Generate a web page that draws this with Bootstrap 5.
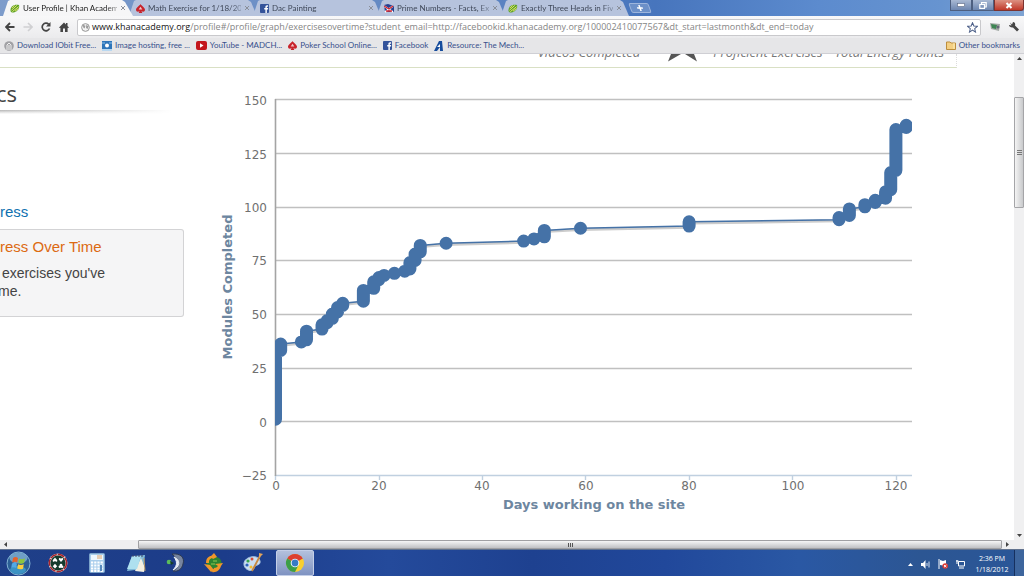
<!DOCTYPE html>
<html lang="en">
<head>
<meta charset="utf-8">
<meta name="viewport" content="width=device-width, initial-scale=1">
<title>User Profile | Khan Academy</title>
<link href="https://cdn.jsdelivr.net/npm/bootstrap@5.3.0/dist/css/bootstrap.min.css" rel="stylesheet">
<style>
  body { font-family: "Open Sans", "Noto Sans", sans-serif; background: #fff; color: #333; }
  svg { display: block; flex: none; }
  button { background: none; border: 0; padding: 0; color: inherit; }
  a { text-decoration: none; color: inherit; }
  .ui-text { font: 8px/12px Lato, "Open Sans", sans-serif; white-space: nowrap; }

  .title-strip { height: 16px; background: linear-gradient(90deg, #7d9ccb 0, #5f86c2 45%, #4775bd 64%, #5c8bce 80%, #6794d0 92%, #7fa4d3 100%); padding-left: 3px; }
  .browser-tab { width: 128px; height: 16px; margin-right: -4px; padding: 0 7px 0 7px; gap: 3px; background: #b6c3dd; color: #3f4859;
    clip-path: polygon(0 100%, 5px 1px, 7px 0, 119px 0, 122px 2px, 100% 100%); }
  .browser-tab.current { background: #f6f6f7; width: 130px; z-index: 1; color: #222; }
  .tab-name { -webkit-mask-image: linear-gradient(90deg, #000 88%, rgba(0,0,0,.4)); min-width: 0; }
  .new-tab { width: 20px; height: 10px; margin: 3px 0 0 5px; background: #6c90c8; border: 1px solid #9db5dc; border-radius: 2px; transform: skewX(20deg); }
  .win-buttons button { width: 22px; height: 11px; background: linear-gradient(#a9b9d3, #6d86b0); border: 1px solid #4d5f80; border-top: 0; }
  .win-buttons .win-close { width: 30px; background: linear-gradient(#dc9182, #c0392a); border-color: #7c3330; border-radius: 0 0 3px 0; }

  .tool-row { height: 22px; background: linear-gradient(#f8f8f9, #ebebed); padding: 0 5px; }
  .address-field { height: 17px; border: 1px solid #c9c9cc; border-radius: 2px; background: #fff; font-size: 9px; color: #858585; white-space: nowrap; padding: 0 2px 0 3px; gap: 2px; }
  .address-field b { font-weight: 400; color: #151515; }
  .mark-row { height: 16px; background: #e6e6e8; border-bottom: 1px solid #cfcfd4; color: #37508c; padding: 0 4px; gap: 6px; line-height: 11px; }
  .mark-row a { display: flex; align-items: center; gap: 3px; }

  .page-pane { min-height: 0; background: #fff; }
  .stat-strip { height: 14px; width: 957px; max-width: 100%; overflow: hidden; border-bottom: 1px solid #d9e0c4; border-right: 1px dotted #ddd; font: italic 13px/16px "Open Sans", sans-serif; color: #777; padding-right: 12px; gap: 12px; }
  .stat-strip span { margin-top: -10px; }
  .star-tip { margin: 0 4px 0 16px; }
  .side-menu { width: 184px; flex: none; font-family: "Liberation Sans", Arial, sans-serif; line-height: 18px; }
  .side-menu h2 { font: 22px/24px "Open Sans", sans-serif; color: #444; margin: 13px 0 0; text-indent: -4px; }
  .fade-rule { height: 4px; width: 172px; margin-top: 5px; background: linear-gradient(90deg, rgba(255,255,255,0), #fff), linear-gradient(#b5b5b5, #e6e6e6 60%, #fff); }
  .side-link { font-size: 15px; color: #0f71b0; margin-top: 89px; }
  .side-card { height: 88px; margin-top: 8px; padding-top: 8px; background: #f5f5f6; border: 1px solid #d3d3d5; border-left: 0; border-radius: 0 3px 3px 0; }
  .side-card a { font-size: 15px; color: #dc6a12; }
  .side-card p { font-size: 14px; color: #444; margin: 8px 0 0 -2px; }

  .chart-holder { min-width: 0; }
  .chart-holder svg { width: 100%; height: auto; }
  .tick-text { font: 12px "DejaVu Sans", sans-serif; fill: #707070; }
  .axis-name { font: bold 13px "DejaVu Sans", sans-serif; fill: #6d869f; }
  .data-marks path { vector-effect: non-scaling-stroke; stroke-linecap: round; stroke-linejoin: round; fill: none; }

  .v-scroll { width: 10px; background: #f0f0f1; }
  .v-scroll .thumb { height: 111px; margin-top: 34px; border: 1px solid #a5a5a8; border-radius: 1px; background: linear-gradient(90deg, #f4f4f4, #c9cacc); }
  .h-scroll { height: 9px; background: #efeff0; padding-right: 12px; }
  .h-scroll .thumb { height: 9px; border: 1px solid #a0a0a3; border-radius: 1px; background: linear-gradient(#f6f6f6, #bfc0c3); margin-left: 128px; }
  .h-scroll button, .v-scroll button { width: 10px; height: 9px; display: grid; place-items: center; }

  .task-strip { height: 27px; border-top: 1px solid #62738f; color: #fff;
    background: linear-gradient(90deg, #1f3f88 0, #1c3c8a 22%, #244a9b 38%, #1e4190 52%, #21489b 65%, #2a58a4 78%, #2c5693 90%, #2a5698 100%); }
  .task-item { width: 39px; height: 26px; display: grid; place-items: center; }
  .task-item.start-orb { width: 36px; margin-right: 2px; }
  .task-item.running { width: 38px; margin-left: 4px; border: 1px solid #c4cfe8; border-radius: 2px; background: linear-gradient(#b3c0dc, #7f93c2); }
  .tray { padding: 2px 3px 0 0; }
  .clock-text { width: 38px; font: 7px/11px "Open Sans", sans-serif; white-space: nowrap; }
  .desk-edge { width: 10px; border-left: 1px solid #16305f; background: #3d659d; }
</style>
</head>
<body class="vh-100 d-flex flex-column overflow-hidden">
<svg width="0" height="0" class="position-absolute" aria-hidden="true">
  <symbol id="leaf" viewBox="0 0 10 10"><path d="M0 8C-.5 3 3 0 9.500 1C10.500 6 7 9 1.500 9.500Z" fill="#5da32c"/><path d="M1 7L7 1.500M2 8.500L9 3M5 8L9 5M1.500 4.500L4.500 1.500" stroke="#e3e36b" stroke-width="1.100"/></symbol>
  <symbol id="spade" viewBox="0 0 10 10"><path d="M5 0C6 2 10 4 10 6.500C10 9 7 9 6 7.500L7 10H3L4 7.500C3 9 0 9 0 6.500C0 4 4 2 5 0Z" fill="#c8232b"/><path d="M5 3L7 6H3Z" fill="#fff" opacity=".75"/></symbol>
  <symbol id="fb" viewBox="0 0 10 10"><rect width="10" height="10" rx="1" fill="#34539a"/><path d="M9 1.500H8C6.500 1.500 6 2.300 6 3.500V4.500H4.700V6H6V10H7.600V6H9V4.500H7.600V3.600C7.600 3 8 3 9 3Z" fill="#fff"/></symbol>
  <symbol id="cross" viewBox="0 0 6 6"><path d="M1 1L5 5M5 1L1 5" stroke="#8a8f99" stroke-width="1"/></symbol>
</svg>

<header>
  <nav class="title-strip d-flex ui-text" aria-label="Tabs">
    <div class="browser-tab current d-flex align-items-center position-relative"><svg width="10" height="9"><use href="#leaf"/></svg><a href="#" class="tab-name flex-fill">User Profile | Khan Academ</a><button aria-label="Close tab"><svg width="6" height="6"><use href="#cross"/></svg></button></div>
    <div class="browser-tab d-flex align-items-center"><svg width="9" height="9"><use href="#spade"/></svg><a href="#" class="tab-name flex-fill">Math Exercise for 1/18/2012</a><button aria-label="Close tab"><svg width="6" height="6"><use href="#cross"/></svg></button></div>
    <div class="browser-tab d-flex align-items-center"><svg width="9" height="9"><use href="#fb"/></svg><a href="#" class="tab-name flex-fill">Dac Painting</a><button aria-label="Close tab"><svg width="6" height="6"><use href="#cross"/></svg></button></div>
    <div class="browser-tab d-flex align-items-center"><svg width="10" height="9" viewBox="0 0 10 9"><path d="M0 1L4 0L10 2V8H1Z" fill="#263f91"/><path d="M0 2L9 8M9 2L1 8" stroke="#fff" stroke-width="1.600"/><path d="M0 2L5 5L9 2M2 7H8" stroke="#d02630" stroke-width="1.300" fill="none"/></svg><a href="#" class="tab-name flex-fill">Prime Numbers - Facts, Exa</a><button aria-label="Close tab"><svg width="6" height="6"><use href="#cross"/></svg></button></div>
    <div class="browser-tab d-flex align-items-center"><svg width="10" height="9"><use href="#leaf"/></svg><a href="#" class="tab-name flex-fill">Exactly Three Heads in Five</a><button aria-label="Close tab"><svg width="6" height="6"><use href="#cross"/></svg></button></div>
    <button class="new-tab d-flex justify-content-center align-items-center" aria-label="New tab"><svg width="6" height="6" viewBox="0 0 6 6"><path d="M3 0V6M0 3H6" stroke="#fff" stroke-width="1.500"/></svg></button>
    <div class="win-buttons d-flex ms-auto">
      <button class="d-flex justify-content-center align-items-center" aria-label="Minimize"><svg width="8" height="4" viewBox="0 0 8 4"><rect x=".5" y=".5" width="7" height="3" fill="#fff" stroke="#5a6680" stroke-width=".6"/></svg></button>
      <button class="d-flex justify-content-center align-items-center" aria-label="Restore"><svg width="8" height="7" viewBox="0 0 8 7"><path d="M2.500 2V.7H7.200V5H6M.8 2.500H5.500V6.300H.8Z" fill="none" stroke="#fff" stroke-width="1.200"/></svg></button>
      <button class="win-close d-flex justify-content-center align-items-center" aria-label="Close"><svg width="8" height="7" viewBox="0 0 8 7"><path d="M1.500 1L6.500 6M6.500 1L1.500 6" stroke="#fff" stroke-width="2"/></svg></button>
    </div>
  </nav>

  <div class="tool-row d-flex align-items-center">
    <button class="me-2" aria-label="Back"><svg width="10" height="10" viewBox="0 0 10 10"><path d="M9.500 5H2M5 1L1 5L5 9" stroke="#444" stroke-width="1.800" fill="none"/></svg></button>
    <button class="me-2" aria-label="Forward"><svg width="10" height="10" viewBox="0 0 10 10"><path d="M.5 5H8M5 1L9 5L5 9" stroke="#d0d0d2" stroke-width="1.600" fill="none"/></svg></button>
    <button class="me-2" aria-label="Reload"><svg width="10" height="10" viewBox="0 0 10 10"><path d="M8.500 6.500A3.800 3.800 0 1 1 7.700 2.300" stroke="#444" stroke-width="1.700" fill="none"/><path d="M9.500 0V4.500H5Z" fill="#444"/></svg></button>
    <button class="me-2" aria-label="Home"><svg width="10" height="10" viewBox="0 0 10 10"><path d="M0 5.500L5 .5L7 2.500V1H8.500V4L10 5.500L9 6L8.600 5.700V10H6V6.500H4V10H1.400V5.700L1 6Z" fill="#444"/></svg></button>
    <div class="address-field d-flex flex-fill align-items-center">
      <svg width="9" height="9" viewBox="0 0 10 10"><circle cx="5" cy="5" r="4.300" fill="#f3f3f3" stroke="#8c8c8c"/><path d="M2 2L5 3L4 6L2.500 5ZM6 2L8.500 4L7 7L5.500 5Z" fill="#9b9b9b"/></svg>
      <a href="#" class="flex-fill"><b>www.khanacademy.org</b>/profile#/profile/graph/exercisesovertime?student_email=http://facebookid.khanacademy.org/100002410077567&amp;dt_start=lastmonth&amp;dt_end=today</a>
      <button aria-label="Bookmark this page"><svg width="11" height="11" viewBox="0 0 12 12"><path d="M6 .8L7.500 4.400L11.300 4.700L8.400 7.200L9.300 11L6 8.900L2.700 11L3.600 7.200L.7 4.700L4.500 4.400Z" fill="#fff" stroke="#4c5f88" stroke-width="1.100"/></svg></button>
    </div>
    <button class="ms-2" aria-label="Extension"><svg width="12" height="10" viewBox="0 0 12 10"><path d="M1 1L11 2L10 9L2 7Z" fill="#a3aaa5"/><path d="M2 2L8 3L7 7L3 6Z" fill="#3c8552"/><circle cx="9" cy="5" r="1.500" fill="#667"/></svg></button>
    <button class="ms-2" aria-label="Settings"><svg width="10" height="10" viewBox="0 0 10 10"><path d="M1 .5L3 2.500L4 0C6 0 6.500 2 6 3.500L10 7.500L8 9.500L4 5.500C2 6 0 4.500 0 3L2.500 3.500Z" fill="#444"/></svg></button>
  </div>

  <nav class="mark-row d-flex align-items-center ui-text" aria-label="Bookmarks">
    <a href="#"><svg width="10" height="10" viewBox="0 0 10 10"><circle cx="5" cy="5" r="4.800" fill="#a1a1a5"/><path d="M3 9V4L5 2L7 4V9M5 4V9" stroke="#eee" fill="none"/></svg>Download IObit Free...</a>
    <a href="#"><svg width="10" height="10" viewBox="0 0 10 10"><rect width="10" height="10" fill="#2f75b9"/><path d="M0 8H10V10H0Z" fill="#b8d7f0"/><circle cx="5" cy="4.500" r="2" fill="#fff"/><path d="M0 2H3M7 2H10" stroke="#8cc1ea"/></svg>Image hosting, free ...</a>
    <a href="#"><svg width="11" height="9" viewBox="0 0 11 9"><rect width="11" height="9" rx="2" fill="#c3161c"/><path d="M4 2.300L7.500 4.500L4 6.700Z" fill="#fff"/></svg>YouTube - MADCH...</a>
    <a href="#"><svg width="9" height="9"><use href="#spade"/></svg>Poker School Online...</a>
    <a href="#"><svg width="9" height="9"><use href="#fb"/></svg>Facebook</a>
    <a href="#"><svg width="10" height="10" viewBox="0 0 10 10"><path d="M0 10L5 0H8L9 10H6V6L3 10Z" fill="#164c9c"/><path d="M3 6L6 3V6Z" fill="#fff"/></svg>Resource: The Mech...</a>
    <a href="#" class="ms-auto"><svg width="10" height="9" viewBox="0 0 10 9"><path d="M.5 1H4L5 2H9.500V8.500H.5Z" fill="#f4cf82" stroke="#bc8d3c"/><path d="M8 2V8" stroke="#fff0bb"/></svg>Other bookmarks</a>
  </nav>
</header>

<div class="d-flex flex-fill page-pane overflow-hidden">
  <main class="flex-fill overflow-hidden">
    <div class="stat-strip d-flex justify-content-end align-items-start">
      <span>Videos Completed</span>
      <svg class="star-tip" width="29" height="8" viewBox="0 0 29 8"><path d="M3 0H13L0 7.500ZM17 0H26L29 7.500Z" fill="#555"/></svg>
      <span>Proficient Exercises</span>
      <span>Total Energy Points</span>
    </div>
    <div class="d-flex align-items-start">
      <aside class="side-menu">
        <h2>cs</h2>
        <div class="fade-rule"></div>
        <div class="side-link"><a href="#">ress</a></div>
        <div class="side-card"><a href="#">ress Over Time</a><p>&nbsp;exercises you've<br>me.</p></div>
      </aside>
      <div class="chart-holder flex-fill">
        <svg viewBox="184 68 830 472" role="img" aria-label="Modules completed by days working on the site">
          <clipPath id="plot"><rect x="275" y="92" width="637" height="384"/></clipPath>
          <path d="M275 99.500H912M275 153.500H912M275 207.500H912M275 260.500H912M275 314.500H912M275 368.500H912M275 421.500H912" stroke="#c0c0c0" stroke-width="1.400"/>
          <path d="M275 475.500H912M275.500 475V480M379.500 475V480M482.500 475V480M585.500 475V480M689.500 475V480M792.500 475V480M896.500 475V480" stroke="#c0d0e0" stroke-width="1.400"/>
          <path d="M275.500 99V476" stroke="#a4a4a4" stroke-width="1.600"/>
          <g class="data-marks" clip-path="url(#plot)">
            <g transform="translate(275.500 422.500) scale(5.170 -2.145)"><path stroke="#ccc" stroke-width="3" d="M1 36L5 37L6 42L9 43L13 55L17 56V61L19 62L20 67L25 70L28 82L33 83L48 84L52 89L59 90L80 91V93L109 94L111 99L114 100L118 104L119 116L120 117V136L122 138"/></g>
            <g transform="translate(275.500 421.300) scale(5.170 -2.145)" stroke="#4572a7">
              <path stroke-width="1.500" d="M1 36L5 37L6 42L9 43L13 55L17 56V61L19 62L20 67L25 70L28 82L33 83L48 84L52 89L59 90L80 91V93L109 94L111 99L114 100L118 104L119 116L120 117V136L122 138"/>
              <path stroke-width="13" d="M0 1V33M1 33V36M5 37V37.010M6 38V42M9 43V45M10 46V47M11 48V50M12 51V53M13 54V55M17 56V61M19 62V65M20 66V67M21 68V68.010M23 69V69.010M25 70V70.010M26 71V74M27 75V78M28 79V82M33 83V83.010M48 84V84.010M50 85V85.010M52 86V89M59 90V90.010M80 91V93M109 94V95M111 96V99M114 100V101M116 102V103M118 104V107M119 108V116M120 117V136M122 137V138"/>
            </g>
          </g>
          <g class="tick-text" text-anchor="end">
            <text x="267" y="105">150</text><text x="267" y="159">125</text><text x="267" y="212">100</text><text x="267" y="265">75</text><text x="267" y="319">50</text><text x="267" y="373">25</text><text x="267" y="427">0</text><text x="267" y="480">−25</text>
          </g>
          <g class="tick-text" text-anchor="middle">
            <text x="276" y="490">0</text><text x="379" y="490">20</text><text x="482" y="490">40</text><text x="586" y="490">60</text><text x="689" y="490">80</text><text x="793" y="490">100</text><text x="896" y="490">120</text>
          </g>
          <text class="axis-name" x="594" y="509" text-anchor="middle">Days working on the site</text>
          <text class="axis-name" transform="translate(232 287) rotate(-90)" text-anchor="middle">Modules Completed</text>
        </svg>
      </div>
    </div>
  </main>
  <div class="v-scroll d-flex flex-column">
    <button aria-label="Scroll up"><svg width="5" height="3" viewBox="0 0 5 3"><path d="M0 3L2.500 0L5 3Z" fill="#444"/></svg></button>
    <div class="thumb d-flex justify-content-center align-items-center"><svg width="5" height="5" viewBox="0 0 5 5"><path d="M0 .5H5M0 2.500H5M0 4.500H5" stroke="#777"/></svg></div>
    <button class="mt-auto" aria-label="Scroll down"><svg width="5" height="3" viewBox="0 0 5 3"><path d="M0 0L2.500 3L5 0Z" fill="#444"/></svg></button>
  </div>
</div>

<footer>
  <div class="h-scroll d-flex">
    <button aria-label="Scroll left"><svg width="3" height="5" viewBox="0 0 3 5"><path d="M3 0L0 2.500L3 5Z" fill="#444"/></svg></button>
    <div class="thumb flex-fill d-flex justify-content-center align-items-center"><svg width="5" height="4" viewBox="0 0 5 4"><path d="M.5 0V4M2.500 0V4M4.500 0V4" stroke="#555"/></svg></div>
    <button aria-label="Scroll right"><svg width="3" height="5" viewBox="0 0 3 5"><path d="M0 0L3 2.500L0 5Z" fill="#444"/></svg></button>
  </div>
  <div class="task-strip d-flex">
    <button class="task-item start-orb" aria-label="Start"><svg width="25" height="25" viewBox="0 0 25 25"><circle cx="12.500" cy="12.500" r="11.500" fill="#2c6096" stroke="#83b3d4"/><ellipse cx="12.500" cy="7" rx="9" ry="5.500" fill="#85b4d5" opacity=".75"/><ellipse cx="12" cy="19" rx="8" ry="4" fill="#43aad6" opacity=".7"/><path d="M7 7Q9.500 5 12 7L11.200 11.500Q9 10 6.200 11.500Z" fill="#e5622c"/><path d="M13 7.500Q16 9 19 7.300L18 12Q15 13.500 12.300 12Z" fill="#8bc53f"/><path d="M6 12.500Q8.500 11 11 12.700L10.200 17Q8 15.500 5.200 17Z" fill="#52a9e6"/><path d="M12 13.300Q15 14.800 17.800 13.200L17 17.700Q14 19 11.200 17.500Z" fill="#fccf3d"/></svg></button>
    <button class="task-item" aria-label="Poker"><svg width="20" height="20" viewBox="0 0 20 20"><circle cx="10" cy="10" r="9.500" fill="#ddd"/><circle cx="10" cy="10" r="8.600" fill="none" stroke="#a8232b" stroke-width="1.600" stroke-dasharray="7 1"/><circle cx="10" cy="10" r="7.500" fill="#133a2c"/><g fill="#fff"><path d="M7 4.500C8 6 9.300 6.500 9.300 7.700C9.300 9 7.700 9 7 8C6.300 9 4.700 9 4.700 7.700C4.700 6.500 6 6 7 4.500Z"/><path d="M13 9L10.800 6.500C10.500 5 12.300 4.500 13 5.700C13.700 4.500 15.500 5 15.200 6.500Z"/><path d="M7 10.800L9.200 13.200L7 15.600L4.800 13.200Z"/><circle cx="13" cy="12" r="1.300"/><circle cx="11.900" cy="13.800" r="1.300"/><circle cx="14.100" cy="13.800" r="1.300"/></g></svg></button>
    <button class="task-item" aria-label="Calculator"><svg width="16" height="20" viewBox="0 0 16 20"><rect x=".5" y=".5" width="15" height="19" rx="1" fill="#a9cdec" stroke="#7ba3ca"/><rect x="2" y="2" width="12" height="5" fill="#eef7ff"/><path d="M8 3H13M8 5H13" stroke="#dfa56d"/><path d="M2 9.500H14M2 12.500H14M2 15.500H14M2 18H14" stroke="#fff" stroke-width="1.800" stroke-dasharray="2.200 1"/><path d="M12 12V18" stroke="#5588bd" stroke-width="2"/></svg></button>
    <button class="task-item" aria-label="Notepad"><svg width="20" height="19" viewBox="0 0 20 19"><path d="M6 2L19 1L17 15L1 17Z" fill="#7fb9d8"/><path d="M15 4L19 14L18 18L9 17Z" fill="#f4efe0"/><path d="M6 2L15 2L11 15L1 15Z" fill="#aee0ef"/><path d="M7 1V3M10 1V3M13 1V3M16 1V3" stroke="#446"/><path d="M18 4L19 17" stroke="#b89965"/></svg></button>
    <button class="task-item" aria-label="TeamSpeak"><svg width="20" height="20" viewBox="0 0 20 20"><path d="M7 1C16 0 20 5 18 11C17 16 13 19 8 18C14 15 15 7 7 1Z" fill="#77859f" stroke="#2c384f"/><path d="M9 4C16 7 15 14 8 17C13 12 12 8 9 4Z" fill="#e9eef7" stroke="#e9eef7"/><circle cx="4" cy="9" r="2.300" fill="#5bbd5b"/><path d="M5 8L9 10L6 12Z" fill="#163c2a"/></svg></button>
    <button class="task-item" aria-label="World"><svg width="20" height="20" viewBox="0 0 20 20"><ellipse cx="10" cy="9.500" rx="7.500" ry="6" fill="#2b8431"/><path d="M2 10C2 5 5 3 7 3L10 0L13 4L9 6L8 5C5 6 5 8 5 10ZM11 11L19 10L17 13C16 17 12 20 8 19L10 15C12 15 13 14 14 13ZM0 11L6 12L10 17L7 19Z" fill="#ef972a"/><path d="M9 8H13M7 11H11" stroke="#8fc952"/></svg></button>
    <button class="task-item" aria-label="Paint"><svg width="22" height="20" viewBox="0 0 22 20"><path d="M2 10C3 3 17 1 18 8C19 13 13 11 12 15C11 20 1 17 2 10Z" fill="#cbdff1" stroke="#a8c3e0"/><circle cx="6" cy="8" r="1.600" fill="#3aa64f"/><circle cx="10" cy="6" r="1.500" fill="#d84e36"/><circle cx="5" cy="12" r="1.600" fill="#2e63bd"/><circle cx="9" cy="14" r="1.500" fill="#f2bd32"/><path d="M18 3L10 18" stroke="#c68a43" stroke-width="1.800"/><path d="M17 5L17 0L21 1Z" fill="#e3a55c"/></svg></button>
    <button class="task-item running" aria-label="Chrome"><svg width="20" height="20" viewBox="0 0 20 20"><circle cx="10" cy="10" r="9" fill="#f8cf2f"/><path d="M10 10L2.200 5.500A9 9 0 0 1 17.800 5.500Z" fill="#dc3f30"/><path d="M10 10L2.200 5.500A9 9 0 0 0 10 19Z" fill="#3b9e48"/><path d="M13.500 12L10 19L7 13Z" fill="#3b9e48"/><circle cx="10" cy="10" r="4.300" fill="#fff"/><circle cx="10" cy="10" r="3.400" fill="#377bc4"/></svg></button>
    <div class="tray d-flex ms-auto align-items-center gap-2">
      <button aria-label="Show hidden icons"><svg width="5" height="3" viewBox="0 0 5 3"><path d="M0 3L2.500 0L5 3Z" fill="#fff"/></svg></button>
      <button aria-label="Volume"><svg width="9" height="9" viewBox="0 0 9 9"><path d="M0 3H2L4.500 0V9L2 6H0Z" fill="#fff"/><path d="M6 3V6M8 1.500V7.500" stroke="#d8e2f2"/></svg></button>
      <button aria-label="Action center"><svg width="10" height="10" viewBox="0 0 10 10"><path d="M1 0V10" stroke="#fff"/><path d="M2 1L5 2L8 1V6L5 6.500L2 6Z" fill="#fff"/><circle cx="7.200" cy="7" r="2.800" fill="#d93b36"/><path d="M6 6L8.400 8.200M8.400 6L6 8.200" stroke="#fff"/></svg></button>
      <button aria-label="Network"><svg width="9" height="9" viewBox="0 0 9 9"><path d="M2.500 1.500H8.500V6H2.500ZM3 8H8M1 0V4M0 1H2.500" fill="none" stroke="#fff"/></svg></button>
      <div class="clock-text text-center">2:36 PM<br>1/18/2012</div>
    </div>
    <div class="desk-edge"></div>
  </div>
</footer>
<script src="https://cdn.jsdelivr.net/npm/bootstrap@5.3.0/dist/js/bootstrap.bundle.min.js"></script>
</body>
</html>
